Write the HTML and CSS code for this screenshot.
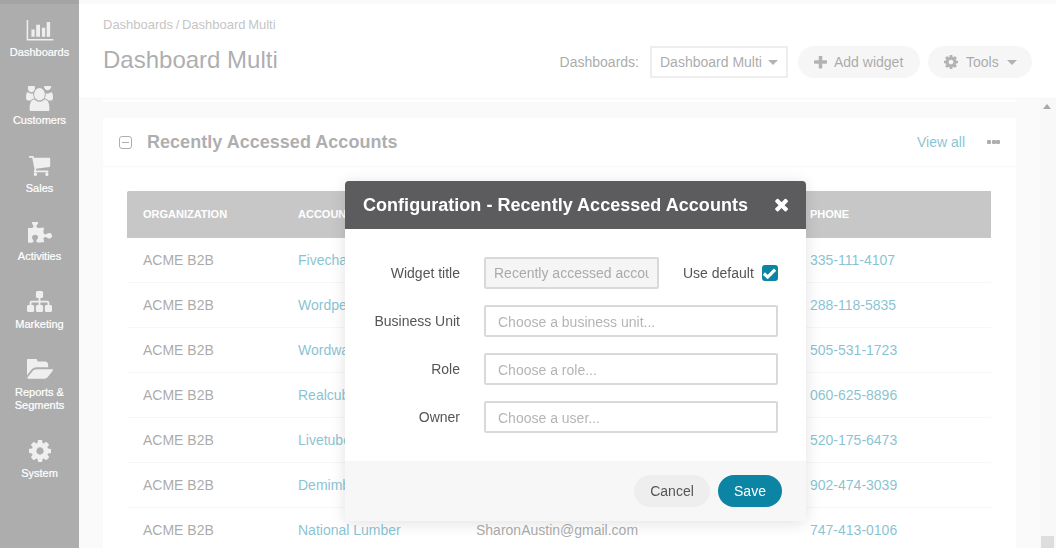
FILE: index.html
```html
<!DOCTYPE html>
<html lang="en">
<head>
<meta charset="utf-8">
<title>Dashboard Multi</title>
<link rel="stylesheet" href="styles.css">
</head>
<body>
<div class="app">
  <nav class="sidebar">
    <a class="nav-item">
      <span class="nav-icon"><svg class="i-dash" viewBox="0 0 28 22"><path d="M0 0h1.6v20h26.4v1.6H0z"/><path d="M5 10h3.4v7.6H5zM10 5h4v12.600H10zM16 8h3.400v9.600H16zM21 2h3.600v15.600H21z"/></svg></span>
      <span class="nav-label">Dashboards</span>
    </a>
    <a class="nav-item">
      <span class="nav-icon"><svg class="i-users" viewBox="0 128 1920 1536" preserveAspectRatio="none"><path d="M593 896q-162 5-265 128h-134q-82 0-138-40.500t-56-118.500q0-353 124-353 6 0 43.500 21t97.500 42.500 119 21.500q67 0 133-23-5 37-5 66 0 139 81 256zm1071 637q0 120-73 189.500t-194 69.500h-874q-121 0-194-69.500t-73-189.500q0-53 3.500-103.500t14-109 26.500-108.500 43-97.500 62-81 85.500-53.500 111.500-20q10 0 43 21.500t73 48 107 48 135 21.500 135-21.500 107-48 73-48 43-21.500q61 0 111.500 20t85.500 53.500 62 81 43 97.500 26.500 108.500 14 109 3.500 103.500zm-1024-1277q0 106-75 181t-181 75-181-75-75-181 75-181 181-75 181 75 75 181zm704 384q0 159-112.500 271.500t-271.500 112.500-271.500-112.500-112.500-271.500 112.500-271.500 271.500-112.500 271.500 112.500 112.500 271.500zm576 225q0 78-56 118.500t-138 40.500h-134q-103-123-265-128 81-117 81-256 0-29-5-66 66 23 133 23 59 0 119-21.500t97.500-42.500 43.500-21q124 0 124 353zm-128-737q0 106-75 181t-181 75-181-75-75-181 75-181 181-75 181 75 75 181z"/></svg></span>
      <span class="nav-label">Customers</span>
    </a>
    <a class="nav-item">
      <span class="nav-icon"><svg class="i-cart" viewBox="0 256 1792 1408" preserveAspectRatio="none"><path d="M704 1536q0 52-38 90t-90 38-90-38-38-90 38-90 90-38 90 38 38 90zm896 0q0 52-38 90t-90 38-90-38-38-90 38-90 90-38 90 38 38 90zm128-1088v512q0 24-16.500 42.500t-40.500 21.500l-1044 122q13 60 13 70 0 16-24 64h920q26 0 45 19t19 45-19 45-45 19h-1024q-26 0-45-19t-19-45q0-11 8-31.500t16-36 21.500-40 15.500-29.500l-177-823h-204q-26 0-45-19t-19-45 19-45 45-19h256q16 0 28.500 6.500t19.500 15.500 13 24.500 8 26 5.500 29.500 4.500 26h1201q26 0 45 19t19 45z"/></svg></span>
      <span class="nav-label">Sales</span>
    </a>
    <a class="nav-item">
      <span class="nav-icon"><svg class="i-puzzle" viewBox="128 128 1536 1536" preserveAspectRatio="none"><path d="M1664 1098q0 81-44.500 135t-123.500 54q-41 0-77.500-17.500t-59-38-56.500-38-71-17.500q-110 0-110 124 0 39 16 115t15 115v5q-22 0-33 1-34 3-97.500 11.500t-115.500 13.500-98 5q-61 0-103-26.500t-42-83.500q0-37 17.500-71t38-56.500 38-59 17.500-77.500q0-79-54-123.500t-135-44.500q-84 0-143 45.500t-59 127.500q0 43 15 83t33.500 64.500 33.500 53 15 50.500q0 45-46 89-37 35-117 35-95 0-245-24-9-2-27.500-4t-27.500-4l-13-2q-1 0-3-1-2 0-2-1v-1024q2 1 17.500 3.500t34 5 21.500 3.500q150 24 245 24 80 0 117-35 46-44 46-89 0-22-15-50.500t-33.500-53-33.500-64.500-15-83q0-82 59-127.500t144-45.500q80 0 134 44.500t54 123.500q0 41-17.500 77.500t-38 59-38 56.500-17.500 71q0 57 42 83.500t103 26.500q64 0 180-15t163-17v2q-1 2-3.500 17.500t-5 34-3.500 21.500q-24 150-24 245 0 80 35 117 44 46 89 46 22 0 50.500-15t53-33.500 64.500-33.500 83-15q82 0 127.500 59t45.500 143z"/></svg></span>
      <span class="nav-label">Activities</span>
    </a>
    <a class="nav-item">
      <span class="nav-icon"><svg class="i-sitemap" viewBox="0 128 1792 1536" preserveAspectRatio="none"><path d="M1792 1248v320q0 40-28 68t-68 28h-320q-40 0-68-28t-28-68v-320q0-40 28-68t68-28h96v-192h-512v192h96q40 0 68 28t28 68v320q0 40-28 68t-68 28h-320q-40 0-68-28t-28-68v-320q0-40 28-68t68-28h96v-192h-512v192h96q40 0 68 28t28 68v320q0 40-28 68t-68 28h-320q-40 0-68-28t-28-68v-320q0-40 28-68t68-28h96v-192q0-52 38-90t90-38h512v-192h-96q-40 0-68-28t-28-68v-320q0-40 28-68t68-28h320q40 0 68 28t28 68v320q0 40-28 68t-68 28h-96v192h512q52 0 90 38t38 90v192h96q40 0 68 28t28 68z"/></svg></span>
      <span class="nav-label">Marketing</span>
    </a>
    <a class="nav-item">
      <span class="nav-icon"><svg class="i-folder" viewBox="0 192 1845 1344" preserveAspectRatio="none"><path d="M1845 931q0 35-35 74l-336 396q-43 51-120.500 86.500t-143.500 35.500h-1088q-34 0-60.500-13t-26.500-43q0-35 35-74l336-396q43-51 120.500-86.500t143.500-35.500h1088q34 0 60.500 13t26.500 43zm-343-344v160h-832q-94 0-197 47.500t-164 119.500l-337 396-5 6q0-4-.5-12.500t-.5-12.500v-960q0-92 66-158t158-66h320q92 0 158 66t66 158v32h544q92 0 158 66t66 158z"/></svg></span>
      <span class="nav-label">Reports &amp; Segments</span>
    </a>
    <a class="nav-item">
      <span class="nav-icon"><svg class="i-gear" viewBox="128 128 1536 1536"><path d="M1152 896q0-106-75-181t-181-75-181 75-75 181 75 181 181 75 181-75 75-181zm512-109v222q0 12-8 23t-20 13l-185 28q-19 54-39 91 35 50 107 138 10 12 10 25t-9 23q-27 37-99 108t-94 71q-12 0-26-9l-138-108q-44 23-91 38-16 136-29 186-7 27-35 27h-222q-14 0-24.500-8.500t-11.500-21.500l-28-184q-49-16-90-37l-141 107q-10 9-25 9-14 0-25-11-126-114-165-168-7-10-7-23 0-12 8-23 15-21 51-66.500t54-70.500q-27-50-41-99l-183-27q-13-2-21-12.500t-8-23.500v-222q0-12 8-23t19-13l186-28q14-46 39-92-40-57-107-138-10-12-10-24 0-10 9-23 26-36 98.500-107.500t94.500-71.500q13 0 26 10l138 107q44-23 91-38 16-136 29-186 7-27 35-27h222q14 0 24.500 8.500t11.500 21.500l28 184q49 16 90 37l142-107q9-9 24-9 13 0 25 10 129 119 165 170 7 8 7 22 0 12-8 23-15 21-51 66.500t-54 70.500q26 50 41 98l183 28q13 2 21 12.500t8 23.500z"/></svg></span>
      <span class="nav-label">System</span>
    </a>
  </nav>

  <div class="main">
    <header class="page-head">
      <div class="page-titles">
        <div class="crumbs">Dashboards / Dashboard Multi</div>
        <h1 class="page-title">Dashboard Multi</h1>
      </div>
      <div class="page-actions">
        <span class="dash-label">Dashboards:</span>
        <div class="dash-select">Dashboard Multi<span class="caret"></span></div>
        <button class="pill pill-add"><svg class="pill-icon" viewBox="192 192 1408 1408"><path d="M1600 736v192q0 40-28 68t-68 28h-416v416q0 40-28 68t-68 28h-192q-40 0-68-28t-28-68v-416h-416q-40 0-68-28t-28-68v-192q0-40 28-68t68-28h416v-416q0-40 28-68t68-28h192q40 0 68 28t28 68v416h416q40 0 68 28t28 68z"/></svg>Add widget</button>
        <button class="pill pill-tools"><svg class="pill-icon" viewBox="128 128 1536 1536"><path d="M1152 896q0-106-75-181t-181-75-181 75-75 181 75 181 181 75 181-75 75-181zm512-109v222q0 12-8 23t-20 13l-185 28q-19 54-39 91 35 50 107 138 10 12 10 25t-9 23q-27 37-99 108t-94 71q-12 0-26-9l-138-108q-44 23-91 38-16 136-29 186-7 27-35 27h-222q-14 0-24.500-8.500t-11.500-21.500l-28-184q-49-16-90-37l-141 107q-10 9-25 9-14 0-25-11-126-114-165-168-7-10-7-23 0-12 8-23 15-21 51-66.500t54-70.500q-27-50-41-99l-183-27q-13-2-21-12.500t-8-23.500v-222q0-12 8-23t19-13l186-28q14-46 39-92-40-57-107-138-10-12-10-24 0-10 9-23 26-36 98.500-107.500t94.500-71.500q13 0 26 10l138 107q44-23 91-38 16-136 29-186 7-27 35-27h222q14 0 24.500 8.500t11.500 21.500l28 184q49 16 90 37l142-107q9-9 24-9 13 0 25 10 129 119 165 170 7 8 7 22 0 12-8 23-15 21-51 66.500t-54 70.500q26 50 41 98l183 28q13 2 21 12.500t8 23.500z"/></svg>Tools<span class="caret caret-tools"></span></button>
      </div>
    </header>

    <div class="scroll-area">
      <div class="content">
        <div class="prev-card"></div>
        <section class="card">
          <div class="card-head">
            <span class="collapse"></span>
            <h2 class="card-title">Recently Accessed Accounts</h2>
            <a class="view-all">View all</a>
            <span class="dots"><i></i><i></i><i></i></span>
          </div>
          <div class="card-body">
            <table class="accounts">
              <colgroup><col class="c1"><col class="c2"><col class="c3"><col class="c4"></colgroup>
              <thead>
                <tr><th>Organization</th><th>Account</th><th>Email</th><th>Phone</th></tr>
              </thead>
              <tbody>
                <tr><td>ACME B2B</td><td><a>Fivechat</a></td><td></td><td><a>335-111-4107</a></td></tr>
                <tr><td>ACME B2B</td><td><a>Wordpedia</a></td><td></td><td><a>288-118-5835</a></td></tr>
                <tr><td>ACME B2B</td><td><a>Wordware</a></td><td></td><td><a>505-531-1723</a></td></tr>
                <tr><td>ACME B2B</td><td><a>Realcube</a></td><td></td><td><a>060-625-8896</a></td></tr>
                <tr><td>ACME B2B</td><td><a>Livetube</a></td><td></td><td><a>520-175-6473</a></td></tr>
                <tr><td>ACME B2B</td><td><a>Demimbu</a></td><td></td><td><a>902-474-3039</a></td></tr>
                <tr><td>ACME B2B</td><td><a>National Lumber</a></td><td>SharonAustin@gmail.com</td><td><a>747-413-0106</a></td></tr>
              </tbody>
            </table>
          </div>
        </section>
      </div>
      <div class="scrollbar"><span class="sb-arrow"></span><span class="sb-thumb"></span></div>
    </div>
  </div>
</div>

<div class="backdrop"></div>

<div class="modal">
  <div class="modal-head">
    <span class="modal-title">Configuration - Recently Accessed Accounts</span>
    <svg class="modal-close" viewBox="198 298 1292 1292"><path d="M1490 1322q0 40-28 68l-136 136q-28 28-68 28t-68-28l-294-294-294 294q-28 28-68 28t-68-28l-136-136q-28-28-28-68t28-68l294-294-294-294q-28-28-28-68t28-68l136-136q28-28 68-28t68 28l294 294 294-294q28-28 68-28t68 28l136 136q28 28 28 68t-28 68l-294 294 294 294q28 28 28 68z"/></svg>
  </div>
  <div class="modal-body">
    <label class="form-label">Widget title</label>
    <div class="title-row">
      <input class="field field-disabled" type="text" value="Recently accessed accounts" disabled>
      <span class="use-default">Use default</span>
      <span class="check"><svg viewBox="0 0 12 10"><path d="M.8 5 4.300 8.300 11.200 1.400" fill="none" stroke="#fff" stroke-width="3"/></svg></span>
    </div>
    <label class="form-label">Business Unit</label>
    <input class="field" type="text" placeholder="Choose a business unit...">
    <label class="form-label">Role</label>
    <input class="field" type="text" placeholder="Choose a role...">
    <label class="form-label">Owner</label>
    <input class="field" type="text" placeholder="Choose a user...">
  </div>
  <div class="modal-foot">
    <button class="btn btn-cancel">Cancel</button>
    <button class="btn btn-save">Save</button>
  </div>
</div>
</body>
</html>
```

FILE: styles.css
```css
* { box-sizing: border-box; }
html, body { margin: 0; height: 100%; overflow: hidden; }
body {
  font-family: "Liberation Sans", Arial, sans-serif;
  font-size: 14px;
  color: #555;
  background: #f5f5f5;
}
.app { display: flex; height: 548px; }

/* sidebar */
.sidebar {
  width: 79px;
  flex: none;
  background: #5b5b5d;
  border-top: 4px solid #48484a;
}
.nav-item {
  display: flex;
  flex-direction: column;
  align-items: center;
  padding: 12px 6px 13px;
  color: #fff;
  text-decoration: none;
}
.nav-icon {
  height: 28px;
  margin-bottom: 2px;
  display: flex;
  align-items: center;
  justify-content: center;
}
.nav-icon svg { display: block; fill: #dfdfdf; }
.i-dash { width: 28px; height: 21px; }
.i-users { width: 27px; height: 25px; }
.i-cart { width: 23px; height: 20px; }
.i-puzzle { width: 24px; height: 22px; margin-top: -3px; }
.i-sitemap { width: 25px; height: 21px; margin-top: -1px; }
.i-folder { width: 26px; height: 20px; margin-top: -3px; }
.i-gear { width: 22px; height: 22px; }
.nav-label {
  font-size: 11px;
  line-height: 13px;
  text-align: center;
  -webkit-text-stroke: .2px #fff;
}

/* main */
.main { flex: 1; min-width: 0; display: flex; flex-direction: column; }
.page-head {
  height: 99px;
  flex: none;
  background: #fff;
  border-top: 4px solid #f5f5f5;
  border-bottom: 1px solid #ececec;
  display: flex;
  justify-content: space-between;
  padding: 0 24px;
}
.crumbs { font-size: 13px; line-height: 16px; color: #888; margin-top: 13px; word-spacing: -1px; }
.page-title {
  margin: 12px 0 0;
  font-size: 24px;
  font-weight: normal;
  line-height: 30px;
  color: #5c5c5f;
}
.page-actions { display: flex; align-items: center; height: 32px; margin-top: 42px; }
.dash-label { margin-right: 11px; }
.dash-select {
  width: 138px;
  height: 32px;
  border: 2px solid #ddd;
  background: #fff;
  display: flex;
  align-items: center;
  padding-left: 8px;
  margin-right: 10px;
  white-space: nowrap;
}
.caret {
  width: 0;
  height: 0;
  border-left: 5px solid transparent;
  border-right: 5px solid transparent;
  border-top: 5px solid #666;
  margin-left: 6px;
}
.caret-tools { margin-left: 8px; border-left-width: 5.500px; border-right-width: 5.500px; }
.pill {
  height: 32px;
  border: 0;
  border-radius: 16px;
  background: #ededed;
  color: #555;
  font: inherit;
  display: flex;
  align-items: center;
  padding: 0 16px;
  white-space: nowrap;
}
.pill-add { width: 122px; margin-right: 8px; }
.pill-tools { width: 104px; }
.pill-icon { width: 13px; height: 13px; fill: #666; margin-right: 7px; flex: none; }
.pill-tools .pill-icon { width: 14px; height: 14px; margin-right: 8px; }

.scroll-area { flex: 1; min-height: 0; display: flex; overflow: hidden; }
.content { flex: 1; min-width: 0; padding: 0 24px; overflow: hidden; }
.prev-card { height: 3px; background: #fff; margin-bottom: 16px; }
.card { background: #fff; }
.card-head {
  height: 49px;
  border-bottom: 1px solid #f0f0f0;
  display: flex;
  align-items: center;
  padding: 0 16px;
}
.collapse {
  width: 13px;
  height: 13px;
  border: 1px solid #5c5c5f;
  border-radius: 3px;
  margin-right: 15px;
  position: relative;
  flex: none;
}
.collapse::after {
  content: "";
  position: absolute;
  left: 2px;
  right: 2px;
  top: 5px;
  height: 1px;
  background: #5c5c5f;
}
.card-title { margin: 0; flex: 1; font-size: 18px; font-weight: bold; color: #5c5c5f; line-height: 24px; letter-spacing: .03px; }
.view-all { color: #0d86a6; margin-right: 22px; }
.dots { display: flex; gap: .5px; }
.dots i { width: 4px; height: 4px; border-radius: 1px; background: #5c5c5f; display: block; }
.card-body { padding: 24px 24px 0; }
.accounts { width: 864px; border-collapse: separate; border-spacing: 0; table-layout: fixed; }
.c1 { width: 155px; }
.c2 { width: 178px; }
.c3 { width: 334px; }
.accounts th {
  height: 47px;
  padding: 0 16px 2px;
  background: #8e8e8e;
  color: #fff;
  font-size: 11px;
  font-weight: bold;
  text-transform: uppercase;
  text-align: left;
}
.accounts th:first-child { border-top-left-radius: 2px; }
.accounts td {
  height: 45px;
  padding: 0 16px;
  border-bottom: 1px solid #eee;
  white-space: nowrap;
}
.accounts a { color: #0d86a6; }

.scrollbar { width: 16px; flex: none; background: #f1f1f1; position: relative; }
.sb-arrow {
  position: absolute;
  top: 5px;
  left: 3px;
  border-left: 4px solid transparent;
  border-right: 4px solid transparent;
  border-bottom: 5px solid #505050;
}
.sb-thumb {
  position: absolute;
  left: 1px;
  right: 2px;
  bottom: 0;
  height: 12px;
  background: #bbb;
}

/* overlay */
.backdrop { position: fixed; inset: 0; background: rgba(255, 255, 255, .5); }
.modal {
  position: fixed;
  left: 345px;
  top: 181px;
  width: 461px;
  background: #fff;
  border-radius: 4px;
  box-shadow: 0 2px 16px rgba(0, 0, 0, .12);
  overflow: hidden;
}
.modal-head {
  height: 48px;
  background: #5c5c5f;
  display: flex;
  align-items: center;
  justify-content: space-between;
  padding: 0 18px;
}
.modal-title { color: #fff; font-size: 18px; font-weight: bold; letter-spacing: .03px; }
.modal-close { width: 14px; height: 14px; fill: #fff; flex: none; }
.modal-body {
  display: grid;
  grid-template-columns: 115px 1fr;
  column-gap: 24px;
  row-gap: 16px;
  padding: 28px 28px 28px 0;
}
.form-label { text-align: right; line-height: 32px; color: #555; }
.title-row { display: flex; align-items: center; }
.field {
  height: 32px;
  width: 100%;
  border: 2px solid #d9d9d9;
  border-radius: 2px;
  padding: 1px 12px 0;
  font: inherit;
  color: #aaa;
  background: #fff;
  outline: 0;
}
.field::placeholder { color: #b5b5b5; opacity: 1; }
.field-disabled {
  width: 175px;
  flex: none;
  padding: 0 8px;
  background: #f5f5f5;
  color: #aaa;
  -webkit-text-fill-color: #aaa;
  opacity: 1;
}
.use-default { margin-left: 24px; color: #555; }
.check {
  width: 16px;
  height: 16px;
  margin-left: 8px;
  border-radius: 3px;
  background: #0c84a4;
  display: flex;
  align-items: center;
  justify-content: center;
}
.check svg { width: 13px; height: 11px; }
.modal-foot {
  height: 60px;
  background: #f7f7f7;
  display: flex;
  justify-content: flex-end;
  align-items: flex-start;
  gap: 8px;
  padding: 14px 24px 0 0;
}
.btn { height: 32px; border: 0; border-radius: 16px; font: inherit; padding: 0; }
.btn-cancel { width: 76px; background: #eee; color: #555; }
.btn-save { width: 64px; background: #0c84a4; color: #fff; }
```
